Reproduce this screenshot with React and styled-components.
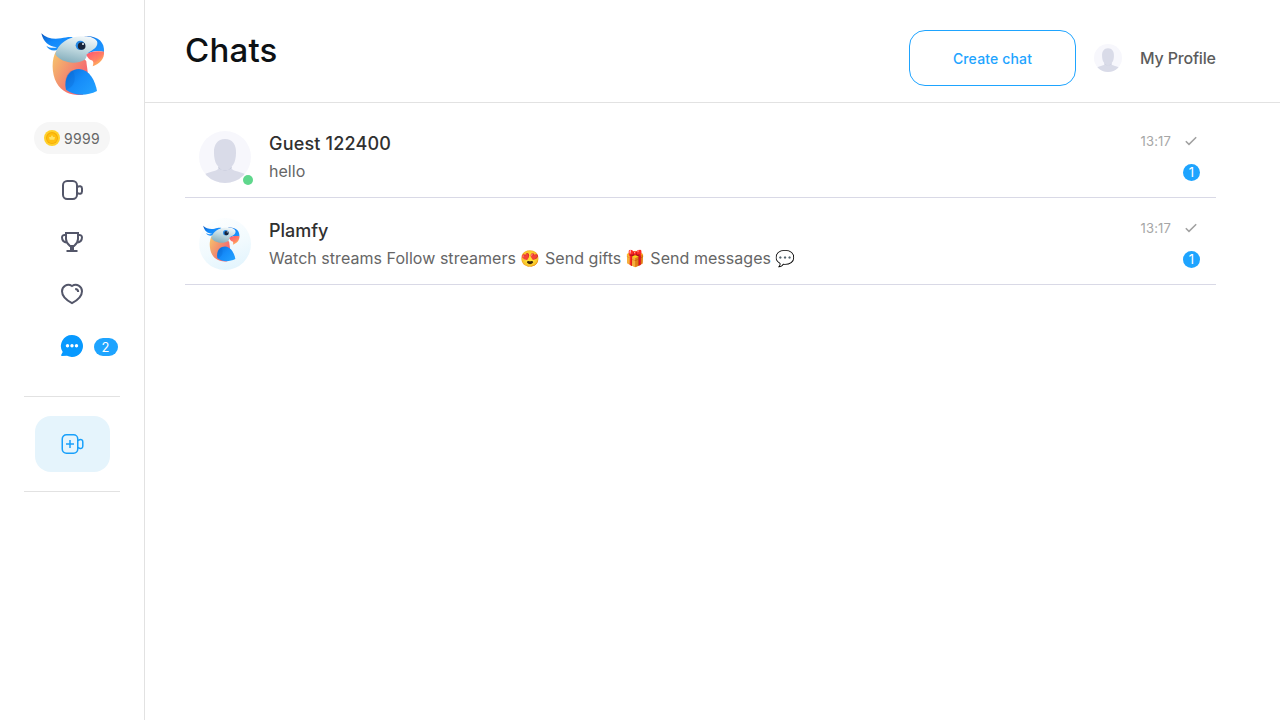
import React, { useId } from "react";
import styled, { createGlobalStyle } from "styled-components";

const GlobalStyle = createGlobalStyle`
  *, *::before, *::after { box-sizing: border-box; }
  body {
    margin: 0;
    background: #fff;
    font-family: Inter, "Liberation Sans", "Noto Color Emoji", sans-serif;
  }
  svg { display: block; flex: none; }
  button { font: inherit; cursor: pointer; }
`;

const Page = styled.div`
  display: flex;
  height: 100vh;
  overflow: hidden;
`;

const Sidebar = styled.aside`
  width: 145px;
  flex: none;
  border-right: 1px solid #e2e2e2;
  display: flex;
  flex-direction: column;
  align-items: center;
  padding: 32px 1px 0 0;
`;

const Logo = styled.a`
  display: block;
  padding-left: 2px;
`;

const Balance = styled.div`
  display: flex;
  align-items: center;
  gap: 4px;
  width: 76px;
  height: 32px;
  margin-top: 26px;
  padding-left: 10px;
  border-radius: 16px;
  background: #f6f6f6;
  color: #666;
  font-size: 14px;
  letter-spacing: 0.3px;
`;

const Amount = styled.span`
  padding-left: 0.5px;
`;

const Nav = styled.nav`
  display: flex;
  flex-direction: column;
  gap: 28px;
  margin-top: 24px;
`;

const NavItem = styled.a`
  display: flex;
  align-items: center;
  width: 24px;
  height: 24px;
  color: #535669;
`;

const NavCount = styled.span`
  flex: none;
  width: 24px;
  height: 18px;
  margin: 2px 0 0 10px;
  border-radius: 9px;
  background: #1ea4ff;
  color: #fff;
  font-size: 13px;
  line-height: 18px;
  text-align: center;
`;

const Divider = styled.hr`
  width: 96px;
  height: 1px;
  margin: ${(p) => p.$top}px 0 0;
  border: 0;
  background: #e2e2e2;
`;

const StreamButton = styled.button`
  display: flex;
  align-items: center;
  justify-content: center;
  width: 75px;
  height: 56px;
  margin: 19px 0 0 1px;
  padding: 0;
  border: 0;
  border-radius: 16px;
  background: #e5f4fc;
`;

const Content = styled.main`
  flex: 1;
  min-width: 0;
`;

const Header = styled.header`
  display: flex;
  align-items: flex-start;
  height: 103px;
  padding: 30px 64px 0 40px;
  border-bottom: 1px solid #e2e2e2;
`;

const Title = styled.h1`
  margin: 0 auto 0 0;
  color: #0d1114;
  font-size: 33px;
  font-weight: 500;
  line-height: 40px;
  letter-spacing: 0.2px;
`;

const CreateButton = styled.button`
  width: 167px;
  height: 56px;
  padding: 0;
  border: 1px solid #1ea4ff;
  border-radius: 16px;
  background: #fff;
  color: #1ea4ff;
  && { font-size: 14px; font-weight: 500; letter-spacing: 0.15px; }
`;

const Profile = styled.a`
  display: flex;
  align-items: center;
  gap: 18px;
  height: 56px;
  width: 122px;
  margin-left: 18px;
  color: #5c5c5c;
  font-size: 16px;
  font-weight: 500;
  letter-spacing: -0.18px;
  white-space: nowrap;
`;

const ChatList = styled.ul`
  margin: 8px 64px 0 40px;
  padding: 0;
  list-style: none;
`;

const ChatRow = styled.li`
  display: flex;
  height: 87px;
  padding: 20px 16px 0 14px;
  border-bottom: 1px solid #d9d9e6;
`;

const AvatarSlot = styled.div`
  position: relative;
  width: 52px;
  height: 52px;
  flex: none;
`;

const BrandAvatar = styled.div`
  width: 52px;
  height: 52px;
  border-radius: 50%;
  padding: 7px 0 0 4px;
  background: linear-gradient(160deg, #fff, #f1fafe 55%, #dff3fd);
`;

const OnlineDot = styled.span`
  position: absolute;
  right: -2px;
  bottom: -2px;
  width: 10px;
  height: 10px;
  border-radius: 50%;
  background: #5fd78c;
`;

const ChatText = styled.div`
  flex: 1;
  min-width: 0;
  margin-left: 18px;
`;

const ChatName = styled.div`
  color: #303030;
  font-size: 18px;
  font-weight: 500;
  line-height: 26px;
  letter-spacing: ${(p) => p.$spacing}px;
`;

const ChatMessage = styled.div`
  margin-top: 2px;
  color: #666;
  font-size: 16px;
  line-height: 24px;
  letter-spacing: 0.04px;
  white-space: nowrap;
`;

const ChatMeta = styled.div`
  display: flex;
  flex-direction: column;
  align-items: flex-end;
`;

const TimeLine = styled.div`
  display: flex;
  align-items: center;
  gap: 13px;
  height: 20px;
  padding-right: 2px;
  color: #a6a6a6;
  font-size: 13px;
  letter-spacing: 0.15px;
`;

const Unread = styled.span`
  width: 17px;
  height: 17px;
  margin-top: 13px;
  border-radius: 50%;
  background: #1ea4ff;
  color: #fff;
  font-size: 13px;
  line-height: 17px;
  text-align: center;
`;

function Parrot({ size }) {
  const id = useId().replace(/[^a-zA-Z0-9]/g, "");
  const ref = (name) => `url(#${id}${name})`;
  return (
    <svg width={size} height={size} viewBox="32 24 192 192">
      <defs>
        <linearGradient id={`${id}crest`} x1="0" y1="0" x2="1" y2="1">
          <stop offset="0" stopColor="#0a55bd" />
          <stop offset=".4" stopColor="#1188fa" />
          <stop offset="1" stopColor="#2399ff" />
        </linearGradient>
        <linearGradient id={`${id}body`} x1="0" y1="0" x2="1" y2=".7">
          <stop offset="0" stopColor="#f7c86a" />
          <stop offset=".5" stopColor="#f2906f" />
          <stop offset="1" stopColor="#f85a70" />
        </linearGradient>
        <linearGradient id={`${id}face`} x1=".7" y1="0" x2=".35" y2="1">
          <stop offset="0" stopColor="#f3f8fa" />
          <stop offset=".5" stopColor="#bfd8df" />
          <stop offset="1" stopColor="#86afbd" />
        </linearGradient>
        <linearGradient id={`${id}beak`} x1="0" y1="0" x2=".8" y2="1">
          <stop offset="0" stopColor="#ff4f70" />
          <stop offset=".55" stopColor="#ff8068" />
          <stop offset="1" stopColor="#ffc453" />
        </linearGradient>
        <linearGradient id={`${id}wing`} x1="0" y1="0" x2="1" y2=".8">
          <stop offset="0" stopColor="#096bd9" />
          <stop offset=".5" stopColor="#168dfa" />
          <stop offset="1" stopColor="#22a0ff" />
        </linearGradient>
      </defs>
      <path fill={ref("body")} d="M78 80C63 104 63 147 79 177C96 207 128 216 158 212L172 166C174 145 170 132 168 112L150 90Z" />
      <path fill={ref("crest")} d="M33 28C48 43 70 47 92 43C105 40 114 38 128 39L84 76C71 84 54 78 48 65C57 72 69 73 80 70C55 68 39 54 33 28Z" />
      <path fill={ref("crest")} d="M162 37C200 33 224 53 221 84C205 79 188 80 170 90L180 60Z" />
      <path fill={ref("face")} d="M75 91C82 58 114 39 151 37C179 35 194 42 200 52C205 65 193 76 178 83C168 88 171 100 163 107C136 124 91 116 75 91Z" />
      <path fill={ref("beak")} d="M168 92C180 81 205 80 221 83C223 105 208 118 187 127C191 116 189 109 181 108C176 106 171 99 168 92Z" />
      <path fill="#ff6864" opacity=".2" d="M195 82H221C218 101 203 111 192 114C197 103 199 92 195 82Z" />
      <path fill={ref("wing")} d="M107 197C99 158 121 135 146 135C178 137 195 171 200 201C167 217 133 216 107 197Z" />
      <path fill="#075fc8" opacity=".22" d="M107 197C99 158 115 142 127 139C141 164 130 192 107 197Z" />
      <circle cx="150" cy="64" r="14" fill="#288ae5" />
      <circle cx="154" cy="66" r="11.5" fill="#17243a" />
      <circle cx="158" cy="60" r="3" fill="#eef8ff" />
    </svg>
  );
}

function Person({ size }) {
  const id = useId().replace(/[^a-zA-Z0-9]/g, "");
  return (
    <svg width={size} height={size} viewBox="0 0 52 52">
      <clipPath id={id}><circle cx="26" cy="26" r="26" /></clipPath>
      <g clipPath={`url(#${id})`}>
        <rect width="52" height="52" fill="#f7f7fc" />
        <path fill="#d9dbe8" d="M19.5 31V37C19 40 13 40 6 43V52H46V43C39 40 33 40 32.5 37V31Z" />
        <path fill="#c4c8d9" d="M19.5 35.5C22 41 30 41 32.5 35.5V37C30 40 22 40 19.5 37Z" />
        <path fill="#d9dbe8" d="M26 8C18.5 8 14.5 14 15 22C15 31 18.5 38.4 26 38.4S37 31 37 22C37.5 14 33.5 8 26 8Z" />
      </g>
    </svg>
  );
}

function Coin() {
  return (
    <svg width="16" height="16" viewBox="0 0 16 16">
      <circle cx="8" cy="8" r="8" fill="#ffd02b" />
      <circle cx="8" cy="8" r="6" fill="#f5ad09" />
      <circle cx="8" cy="8.3" r="5" fill="#ffbf10" />
      <path fill="#ffe365" d="M5 7L6.8 7.1L8 5L9.2 7.1L11 7L10.3 9.8H5.7Z" />
    </svg>
  );
}

function Camera({ plus = false }) {
  return (
    <svg width="24" height="24" viewBox={plus ? "-0.5 0 24 24" : "0 0 24 24"} fill="none" stroke={plus ? "#18a0fb" : "currentColor"} strokeWidth={plus ? 1.5 : 2}>
      <rect x={plus ? 1.75 : 3} y={plus ? 2.75 : 3} width={plus ? 15.5 : 14} height={plus ? 18.5 : 18} rx="4.2" />
      <path d={plus ? "M17.5 8.5L19 7.8C21 7.2 22.3 8 22.3 10V14C22.3 16 21 16.8 19 16.2L17.5 15.5" : "M17 9.2C19.4 7.7 22 8 22 10.5V13.5C22 16 19.4 16.3 17 14.8"} />
      {plus && <path d="M9.5 8V16M5.5 12H13.5" />}
    </svg>
  );
}

function Trophy() {
  return (
    <svg width="24" height="24" viewBox="0 0 24 24" fill="none" stroke="currentColor" strokeWidth="2">
      <path d="M6 3H18V9C18 12.5 15.5 14.5 14 16H10C8.5 14.5 6 12.5 6 9ZM6 5.3C3.5 4.6 2 5.3 2 7.3C2 10 4 12.3 7.2 12.8M18 5.3C20.5 4.6 22 5.3 22 7.3C22 10 20 12.3 16.8 12.8M6.5 21H17.5M11 15.5V21M13 15.5V21" />
    </svg>
  );
}

function Heart() {
  return (
    <svg width="24" height="24" viewBox="0 0 24 24" fill="none" stroke="currentColor" strokeWidth="2">
      <path d="M12 4C16.5 1 22 4 22 9.3C22 14.7 16.5 18.8 12 21.2C7.5 18.8 2 14.7 2 9.3C2 4 7.5 1 12 4Z" />
      <path d="M15.2 6.9C17 7 18.1 8.1 18.2 10" />
    </svg>
  );
}

function Bubble() {
  return (
    <svg width="24" height="24" viewBox="0 0 24 24">
      <path fill="#0799ff" d="M12 1A11 11 0 1 1 7 21.8L2 22C1 22 .8 21.2 1.4 20.5L2.7 18A11 11 0 0 1 12 1Z" />
      <g fill="#fff"><circle cx="7.5" cy="11.7" r="1.7" /><circle cx="12" cy="11.7" r="1.7" /><circle cx="16.5" cy="11.7" r="1.7" /></g>
    </svg>
  );
}

function Check() {
  return (
    <svg width="14" height="14" viewBox="0 0 14 14" fill="none" stroke="#a0a0a0" strokeWidth="1.5">
      <path d="M1.8 7.2L5 10.4L12.2 3.2" />
    </svg>
  );
}

const chats = [
  { name: "Guest 122400", message: "hello", time: "13:17", unread: 1, online: true, spacing: 0.18 },
  { name: "Plamfy", message: "Watch streams Follow streamers 😍 Send gifts 🎁 Send messages 💬", time: "13:17", unread: 1, brand: true, spacing: 0 },
];

export default function App() {
  return (
    <>
      <GlobalStyle />
      <Page>
        <Sidebar>
          <Logo><Parrot size={64} /></Logo>
          <Balance><Coin /><Amount>9999</Amount></Balance>
          <Nav>
            <NavItem><Camera /></NavItem>
            <NavItem><Trophy /></NavItem>
            <NavItem><Heart /></NavItem>
            <NavItem><Bubble /><NavCount>2</NavCount></NavItem>
          </Nav>
          <Divider $top={38} />
          <StreamButton aria-label="Start stream"><Camera plus /></StreamButton>
          <Divider $top={19} />
        </Sidebar>
        <Content>
          <Header>
            <Title>Chats</Title>
            <CreateButton>Create chat</CreateButton>
            <Profile><Person size={28} />My Profile</Profile>
          </Header>
          <ChatList>
            {chats.map((chat) => (
              <ChatRow key={chat.name}>
                <AvatarSlot>
                  {chat.brand ? <BrandAvatar><Parrot size={37} /></BrandAvatar> : <Person size={52} />}
                  {chat.online && <OnlineDot />}
                </AvatarSlot>
                <ChatText>
                  <ChatName $spacing={chat.spacing}>{chat.name}</ChatName>
                  <ChatMessage>{chat.message}</ChatMessage>
                </ChatText>
                <ChatMeta>
                  <TimeLine>{chat.time}<Check /></TimeLine>
                  <Unread>{chat.unread}</Unread>
                </ChatMeta>
              </ChatRow>
            ))}
          </ChatList>
        </Content>
      </Page>
    </>
  );
}
